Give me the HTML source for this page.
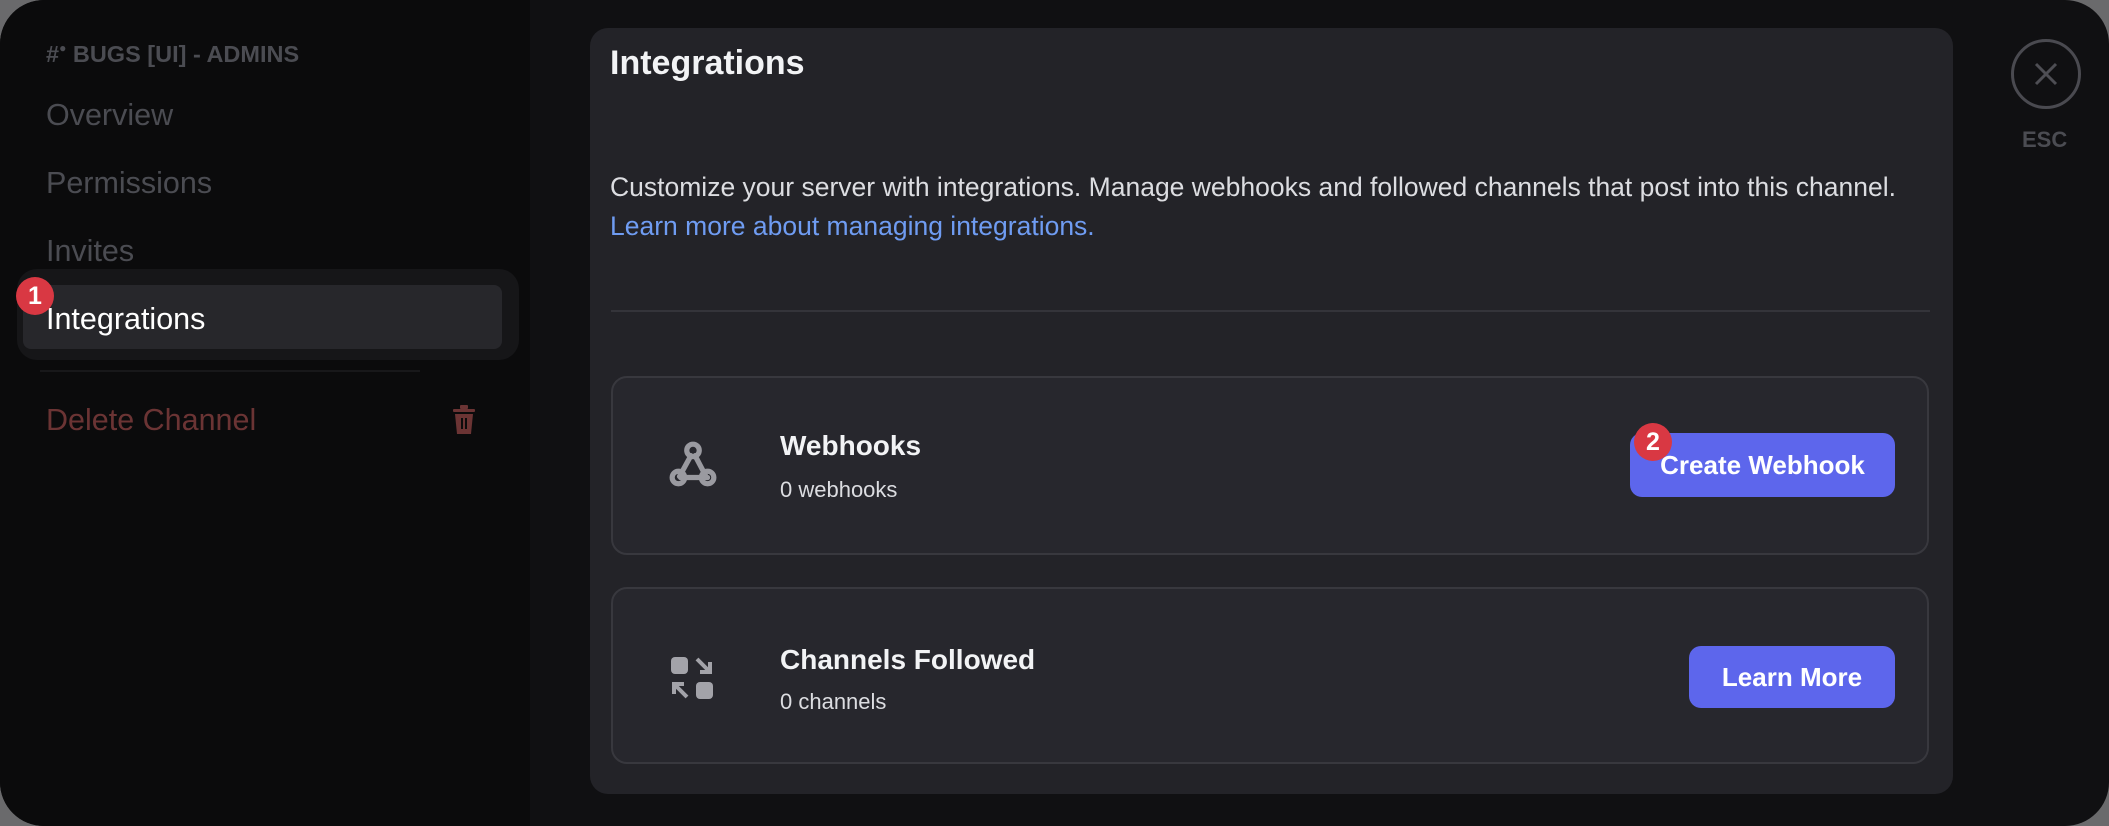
<!DOCTYPE html>
<html><head><style>
*{margin:0;padding:0;box-sizing:border-box}
html,body{width:2109px;height:826px;overflow:hidden;background:#6a6a6c;font-family:"Liberation Sans",sans-serif}
.frame{position:absolute;left:0;top:0;width:2109px;height:826px;border-radius:44px;background:#101012;overflow:hidden}
.side{position:absolute;left:0;top:0;width:530px;height:826px;background:#0b0b0c}
.t{position:absolute;white-space:nowrap}
.item{font-size:30.5px;color:#4b4c52;left:46px}
.panel{position:absolute;left:590px;top:28px;width:1363px;height:766px;background:#232328;border-radius:18px}
.card{position:absolute;left:21px;width:1318px;border:2px solid #38383e;border-radius:16px;background:#27272d}
.btn{position:absolute;background:#5d66ec;color:#fff;border-radius:12px;font-size:26px;font-weight:bold;text-align:center}
.badge{position:absolute;width:38px;height:38px;border-radius:50%;background:#d93843;color:#fff;font-weight:bold;font-size:25px;text-align:center;line-height:38px}
</style></head><body>
<div class="frame">
<div class="side">
 <div class="t" style="left:46px;top:41px;font-size:23.5px;font-weight:bold;color:#4b4c52">#<span style="font-size:12px;vertical-align:top">●</span> BUGS [UI] - ADMINS</div>
 <div class="t item" style="top:98px">Overview</div>
 <div class="t item" style="top:166px">Permissions</div>
 <div class="t item" style="top:234px">Invites</div>
 <div style="position:absolute;left:17px;top:269px;width:502px;height:91px;border-radius:20px;background:#161618"></div>
 <div style="position:absolute;left:23px;top:285px;width:479px;height:64px;border-radius:8px;background:#27272b"></div>
 <div class="t" style="left:46px;top:302px;font-size:30.5px;color:#fff">Integrations</div>
 <div class="badge" style="left:16px;top:277px">1</div>
 <div style="position:absolute;left:40px;top:370px;width:380px;height:2px;background:#18181a"></div>
 <div class="t" style="left:46px;top:403px;font-size:30.5px;color:#6b3434">Delete Channel</div>
 <svg style="position:absolute;left:452px;top:405px" width="24" height="30" viewBox="0 0 24 30"><rect x="1" y="4" width="22" height="3" rx="1" fill="#6b3434"/><rect x="8" y="0" width="8" height="4" rx="1" fill="#6b3434"/><path d="M3 9h18l-2 20H5z" fill="#6b3434"/><rect x="9" y="13" width="2" height="11" fill="#0b0b0c"/><rect x="13" y="13" width="2" height="11" fill="#0b0b0c"/></svg>
</div>
<div class="panel">
 <div class="t" style="left:20px;top:16px;font-size:34px;font-weight:bold;color:#f2f3f5">Integrations</div>
 <div class="t" style="left:20px;top:144px;font-size:26.5px;color:#dcdde1">Customize your server with integrations. Manage webhooks and followed channels that post into this channel.</div>
 <div class="t" style="left:20px;top:183px;font-size:26.5px;color:#6f9cf2">Learn more about managing integrations.</div>
 <div style="position:absolute;left:21px;top:282px;width:1319px;height:2px;background:#34343a"></div>
 <div class="card" style="top:348px;height:179px">
  <svg style="position:absolute;left:55px;top:62px" width="50" height="50" viewBox="0 0 48 48" fill="none" stroke="#9a9aa0" stroke-width="5" stroke-linecap="round"><circle cx="24" cy="10" r="6"/><circle cx="10" cy="36" r="6"/><circle cx="38" cy="36" r="6"/><path d="M22 15L11 35M12 36h26M26 15l10 19"/></svg>
  <div class="t" style="left:167px;top:52px;font-size:28px;font-weight:bold;color:#f2f3f5">Webhooks</div>
  <div class="t" style="left:167px;top:99px;font-size:22px;color:#dcdde1">0 webhooks</div>
  <div class="btn" style="left:1017px;top:55px;width:265px;height:64px;line-height:64px">Create Webhook</div>
  <div class="badge" style="left:1021px;top:45px">2</div>
 </div>
 <div class="card" style="top:559px;height:177px">
  <svg style="position:absolute;left:58px;top:68px" width="42" height="42" viewBox="0 0 42 42"><g fill="#a3a3a9"><rect x="0" y="0" width="17" height="17" rx="4"/><rect x="25" y="25" width="17" height="17" rx="4"/></g><g fill="none" stroke="#a3a3a9" stroke-width="4"><path d="M26 2L39 15M39 5V15H29"/><path d="M16 40L3 27M3 37V27H13"/></g></svg>
  <div class="t" style="left:167px;top:55px;font-size:28px;font-weight:bold;color:#f2f3f5">Channels Followed</div>
  <div class="t" style="left:167px;top:100px;font-size:22px;color:#dcdde1">0 channels</div>
  <div class="btn" style="left:1076px;top:57px;width:206px;height:62px;line-height:62px">Learn More</div>
 </div>
</div>
<div style="position:absolute;left:2011px;top:39px;width:70px;height:70px;border-radius:50%;border:3px solid #4a4a50"></div>
<svg style="position:absolute;left:2033px;top:61px" width="26" height="26" viewBox="0 0 26 26" stroke="#4e4e54" stroke-width="3"><path d="M3 3l20 20M23 3L3 23"/></svg>
<div class="t" style="left:2022px;top:127px;font-size:22px;font-weight:bold;color:#4b4c52">ESC</div>
</div>
</body></html>
